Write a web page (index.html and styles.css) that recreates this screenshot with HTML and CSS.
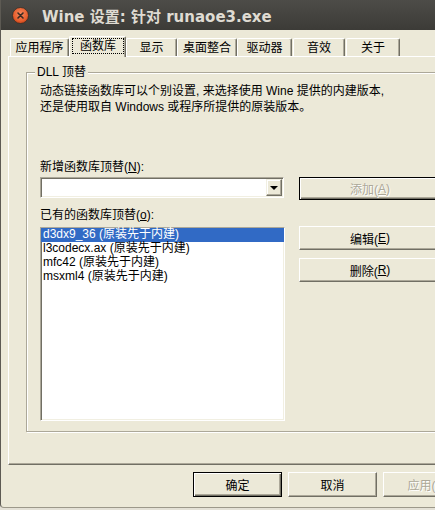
FILE: index.html
```html
<!DOCTYPE html>
<html lang="zh-CN">
<head>
<meta charset="utf-8">
<title>Wine 设置</title>
<link rel="stylesheet" href="styles.css">
</head>
<body>
<div class="window">
  <div class="titlebar">
    <span class="close">
      <svg width="17" height="17" viewBox="0 0 17 17">
        <defs>
          <radialGradient id="cg" cx="50%" cy="40%" r="60%">
            <stop offset="0" stop-color="#f5895e"/>
            <stop offset="0.7" stop-color="#e8602f"/>
            <stop offset="1" stop-color="#c94418"/>
          </radialGradient>
        </defs>
        <circle cx="8.5" cy="8.5" r="8" fill="url(#cg)" stroke="#2e2d2a" stroke-width="0.8"/>
        <path d="M6 6 L11 11 M11 6 L6 11" stroke="#3a2a22" stroke-width="1.6" stroke-linecap="round"/>
      </svg>
    </span>
    <span class="title">Wine 设置: 针对 runaoe3.exe</span>
  </div>
  <div class="client">
    <div class="tabs">
      <div class="tab t1">应用程序</div>
      <div class="tab t2 active"><span class="focus">函数库</span></div>
      <div class="tab t3">显示</div>
      <div class="tab t4">桌面整合</div>
      <div class="tab t5">驱动器</div>
      <div class="tab t6">音效</div>
      <div class="tab t7">关于</div>
    </div>
    <div class="panel">
      <fieldset class="group">
        <legend>DLL 顶替</legend>
        <p class="desc">动态链接函数库可以个别设置, 来选择使用 Wine 提供的内建版本,<br>还是使用取自 Windows 或程序所提供的原装版本。</p>
        <div class="row row-new">
          <div class="col-left">
            <div class="label">新增函数库顶替(<u>N</u>):</div>
            <div class="combo">
              <div class="combo-field"></div>
              <div class="combo-btn"><span class="arrow"></span></div>
            </div>
          </div>
          <div class="col-right col-right-new">
            <button class="btn default disabled btn-side">添加(<u>A</u>)</button>
          </div>
        </div>
        <div class="row row-list">
          <div class="col-left">
            <div class="label">已有的函数库顶替(<u>o</u>):</div>
            <ul class="listbox">
              <li class="selected">d3dx9_36 (原装先于内建)</li>
              <li>l3codecx.ax (原装先于内建)</li>
              <li>mfc42 (原装先于内建)</li>
              <li>msxml4 (原装先于内建)</li>
            </ul>
          </div>
          <div class="col-right col-right-list">
            <button class="btn btn-side">编辑(<u>E</u>)</button>
            <button class="btn btn-side">删除(<u>R</u>)</button>
          </div>
        </div>
      </fieldset>
    </div>
    <div class="footer">
      <button class="btn default btn-foot">确定</button>
      <button class="btn btn-foot">取消</button>
      <button class="btn disabled btn-foot">应用(<u>A</u>)</button>
    </div>
  </div>
</div>
</body>
</html>
```

FILE: styles.css
```css
html, body {
  margin: 0;
  padding: 0;
}
body {
  background: #e4e1d6;
  overflow: hidden;
  width: 435px;
  height: 510px;
  font-family: "Liberation Sans", "Noto Sans CJK SC", sans-serif;
  font-size: 12px;
  color: #000;
}
.window {
  box-sizing: border-box;
  width: 480px;
  height: 508px;
  background: #ece9d8;
  border-left: 1px solid #5d5a53;
  border-bottom: 1px solid #9c988a;
  border-bottom-left-radius: 4px;
  display: flex;
  flex-direction: column;
}
.titlebar {
  height: 30px;
  flex: none;
  background: linear-gradient(#4d4c48, #3c3b37);
  display: flex;
  align-items: center;
  padding-left: 11px;
}
.close {
  width: 17px;
  height: 17px;
  display: block;
}
.close svg { display: block; }
.title {
  margin-left: 13px;
  color: #dfdbd2;
  font-family: "DejaVu Sans", "Noto Sans CJK SC", sans-serif;
  font-weight: bold;
  font-size: 15px;
  white-space: nowrap;
}
.client {
  flex: 1;
  display: flex;
  flex-direction: column;
}
.tabs {
  display: flex;
  align-items: flex-end;
  height: 20px;
  margin-top: 6px;
  padding-left: 9px;
}
.tab {
  box-sizing: border-box;
  height: 18px;
  background: #ece9d8;
  border-top: 1px solid #fff;
  border-left: 1px solid #fff;
  border-right: 1px solid #716f64;
  box-shadow: inset -1px 0 0 #aca899;
  border-top-left-radius: 2px;
  border-top-right-radius: 2px;
  display: flex;
  align-items: center;
  justify-content: center;
  line-height: 16px;
  white-space: nowrap;
}
.t1 { width: 59px; }
.t2 { width: 57px; }
.t3 { width: 51px; }
.t4 { width: 60px; }
.t5 { width: 55px; }
.t6 { width: 52px; margin-left: 1px; }
.t7 { width: 54px; margin-left: 1px; }
.tab.active {
  height: 21px;
  margin-bottom: -1px;
  position: relative;
  z-index: 1;
  align-items: flex-start;
}
.focus {
  display: flex;
  align-items: center;
  justify-content: center;
  box-sizing: border-box;
  width: 52px;
  height: 16px;
  margin: 1px 0 0 1px;
  border: 1px dotted #000;
}
.panel {
  margin: 0 8px 0 7px;
  border-top: 1px solid #fff;
  border-left: 1px solid #fff;
  border-right: 1px solid #716f64;
  border-bottom: 1px solid #716f64;
  box-shadow: inset -1px -1px 0 #aca899;
  padding: 7px 17px 32px 17px;
}
.group {
  margin: 0;
  padding: 0 19px 10px 13px;
  border: 1px solid #aca899;
  box-shadow: inset 1px 1px 0 #fff, 1px 1px 0 #fff;
  min-width: 0;
}
.group legend {
  margin-left: -5px;
  padding: 0 2px;
  line-height: 16px;
  background: #ece9d8;
}
.desc {
  margin: 3px 0 0;
  line-height: 16px;
  white-space: nowrap;
}
.row {
  display: flex;
  gap: 14px;
}
.row-new { margin-top: 44px; }
.row-list { margin-top: 7px; }
.col-left {
  width: 245px;
  flex: none;
}
.col-right {
  display: flex;
  flex-direction: column;
}
.col-right-new { padding-top: 18px; }
.col-right-list { padding-top: 19px; gap: 8px; }
.label {
  line-height: 16px;
  white-space: nowrap;
}
.combo {
  box-sizing: border-box;
  margin-top: 2px;
  width: 244px;
  height: 21px;
  background: #fff;
  border: 1px solid;
  border-color: #aca899 #fff #fff #aca899;
  box-shadow: inset 1px 1px 0 #716f64, inset -1px -1px 0 #f1efe2;
  display: flex;
  padding: 1px;
}
.combo-field { flex: 1; }
.combo-btn {
  box-sizing: border-box;
  width: 16px;
  height: 17px;
  background: #ece9d8;
  border: 1px solid;
  border-color: #f1efe2 #716f64 #716f64 #f1efe2;
  box-shadow: inset -1px -1px 0 #aca899, inset 1px 1px 0 #fff;
  display: flex;
  align-items: center;
  justify-content: center;
}
.arrow {
  width: 0;
  height: 0;
  border-left: 4px solid transparent;
  border-right: 4px solid transparent;
  border-top: 4px solid #000;
}
.listbox {
  box-sizing: border-box;
  list-style: none;
  margin: 4px 0 0;
  padding: 0;
  width: 245px;
  height: 194px;
  background: #fff;
  border: 1px solid;
  border-color: #aca899 #fff #fff #aca899;
  box-shadow: inset 1px 1px 0 #716f64, inset -1px -1px 0 #f1efe2;
}
.listbox li {
  height: 14px;
  line-height: 12px;
  padding-left: 2px;
  white-space: nowrap;
}
.listbox li.selected {
  background: #316ac5;
  color: #fff;
}
.btn {
  box-sizing: border-box;
  background: #ece9d8;
  border: 1px solid;
  border-color: #fff #716f64 #716f64 #fff;
  box-shadow: inset -1px -1px 0 #aca899;
  font: inherit;
  color: #000;
  padding: 0;
  margin: 0;
  display: flex;
  align-items: center;
  justify-content: center;
  white-space: nowrap;
}
.btn.default {
  border: 1px solid #000;
  box-shadow: inset 1px 1px 0 #fff, inset -1px -1px 0 #716f64, inset -2px -2px 0 #aca899;
}
.btn.disabled {
  color: #aca899;
  text-shadow: 1px 1px 0 #fff;
}
.btn-side {
  width: 142px;
  height: 24px;
}
.col-right-new .btn-side { height: 23px; }
.footer {
  display: flex;
  justify-content: flex-end;
  gap: 6px;
  margin-top: 7px;
  padding-right: 8px;
}
.btn-foot {
  width: 89px;
  height: 25px;
}
```
